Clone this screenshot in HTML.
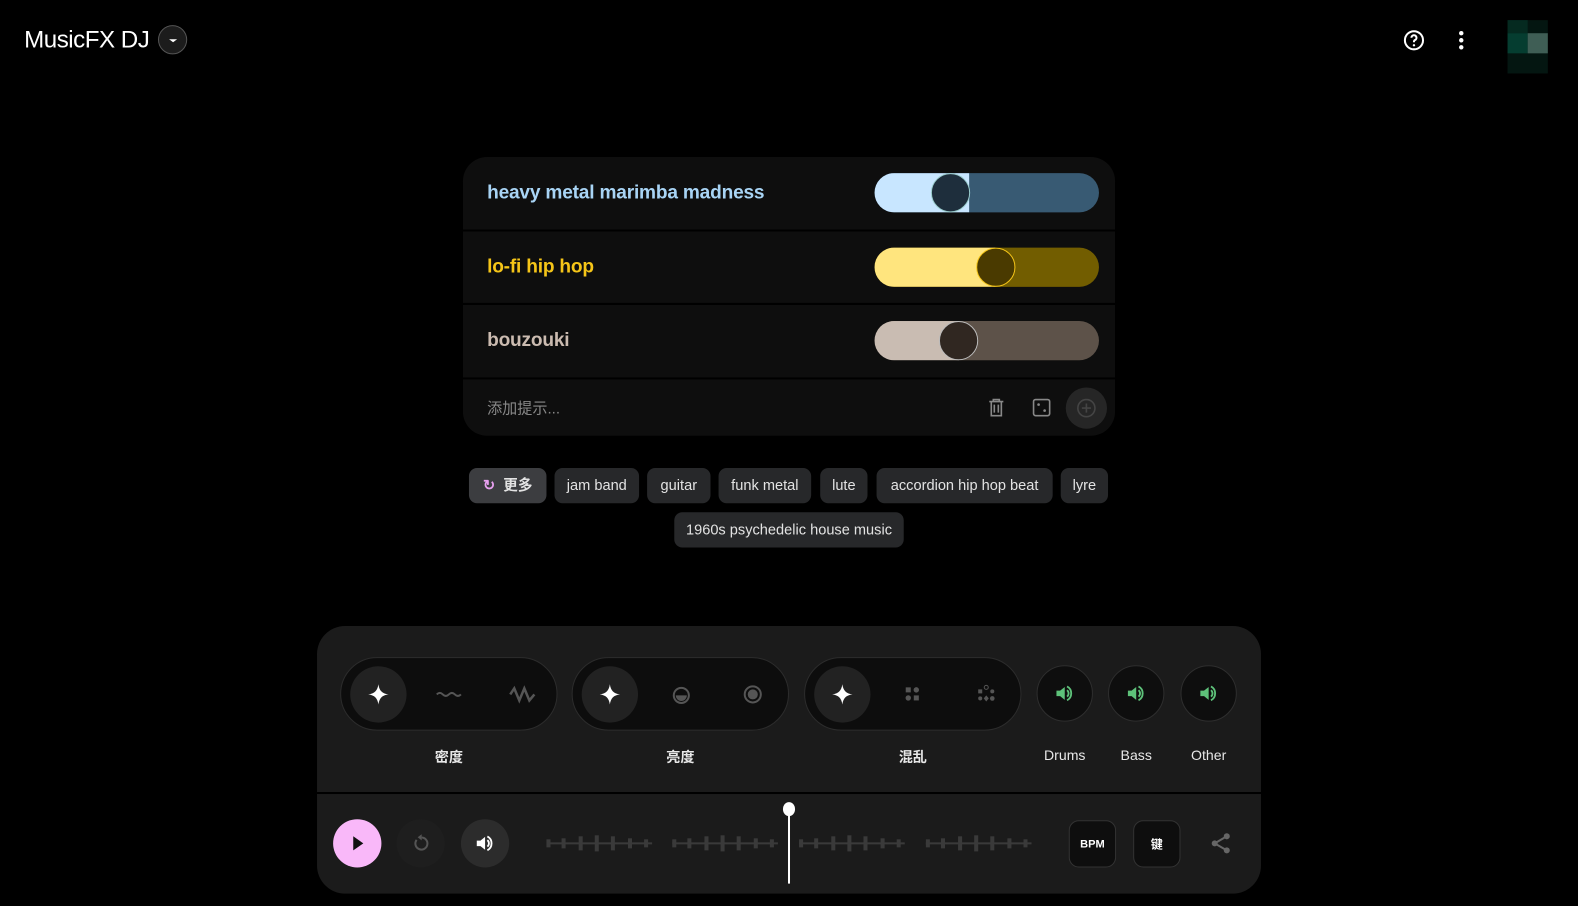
<!DOCTYPE html>
<html><head><meta charset="utf-8"><style>
*{box-sizing:border-box;margin:0;padding:0}
body{width:1578px;height:906px;background:#000;font-family:"Liberation Sans","Noto Sans CJK SC",sans-serif;color:#fff;position:relative;overflow:hidden}
#w{position:absolute;left:0;top:0;width:1568px;height:900px;transform:scale(1.00638);transform-origin:0 0}
.abs{position:absolute}
.row{position:absolute;left:460px;width:648px;background:#0e0e0e}
.lbl{position:absolute;left:24px;font-size:19px;font-weight:bold;letter-spacing:-0.2px}
.sl{position:absolute;left:409px;top:16px;width:223px;height:39px;border-radius:20px;overflow:hidden}
.knob{position:absolute;top:0;width:39px;height:39px;border-radius:50%}
.chip{position:absolute;top:465px;height:35px;background:#27282a;border-radius:8px;font-size:14.5px;color:#e3e3e3;line-height:37px;text-align:center}
.pill{position:absolute;top:653px;width:216px;height:73px;border-radius:37px;background:#0d0d0d;border:1px solid #2c2c2c}
.pill .c{position:absolute;left:9px;top:8px;width:56px;height:56px;border-radius:50%;background:#222;display:flex;align-items:center;justify-content:center}
.glab{position:absolute;top:742px;font-size:14px;font-weight:bold;color:#e8e8e8;text-align:center}
.sb{position:absolute;top:661px;width:56px;height:56px;border-radius:50%;background:#0e0e0e;border:1px solid #2e2e2e;display:flex;align-items:center;justify-content:center}
.sq{position:absolute;top:815px;width:47px;height:47px;border-radius:10px;background:#0e0e0e;border:1px solid #333;font-size:11px;font-weight:bold;display:flex;align-items:center;justify-content:center}
</style></head><body><div id="w">
<div class="abs" style="left:24px;top:26px;font-size:24px;letter-spacing:-0.5px">MusicFX DJ</div>
<div class="abs" style="left:157px;top:25px;width:29px;height:29px;border-radius:50%;background:#1c1c1c;border:1px solid #555"><div class="abs" style="left:10px;top:13px;border-left:4px solid transparent;border-right:4px solid transparent;border-top:3px solid #fff"></div></div>
<svg class="abs" style="left:1393px;top:28px" width="24" height="24" viewBox="0 0 24 24"><circle cx="12" cy="12" r="9" fill="none" stroke="#fff" stroke-width="2"/><path d="M9.5 9.5a2.5 2.5 0 1 1 3.5 2.3c-.7.4-1 .9-1 1.7v.5" fill="none" stroke="#fff" stroke-width="2"/><circle cx="12" cy="17" r="1.2" fill="#fff"/></svg>
<svg class="abs" style="left:1446px;top:30px" width="12" height="20"><circle cx="6" cy="3" r="2.2" fill="#fff"/><circle cx="6" cy="10" r="2.2" fill="#fff"/><circle cx="6" cy="17" r="2.2" fill="#fff"/></svg>
<div class="abs" style="left:1498px;top:20px;width:40px;height:53px;background:#041611">
<div class="abs" style="left:0;top:0;width:20px;height:13px;background:#052a20"></div>
<div class="abs" style="left:0;top:13px;width:20px;height:20px;background:#053d30"></div>
<div class="abs" style="left:20px;top:13px;width:20px;height:20px;background:#3f5e55"></div></div>

<div class="row" style="top:156px;height:72px;border-radius:24px 24px 0 0">
<div class="lbl" style="top:25px;color:#a8d4f5">heavy metal marimba madness</div>
<div class="sl" style="background:#385a73"><div class="abs" style="left:0;top:0;width:94px;height:39px;background:#c8e6ff"></div><div class="knob" style="left:56px;background:#1e2e3c;border:1px solid #9cc"></div></div></div>
<div class="row" style="top:230px;height:71px">
<div class="lbl" style="top:25px;color:#f5c518">lo-fi hip hop</div>
<div class="sl" style="top:16px;background:#725d00"><div class="abs" style="left:0;top:0;width:120px;height:39px;background:#ffe57e"></div><div class="knob" style="left:101px;background:#4a3a00;border:1px solid #f5c518"></div></div></div>
<div class="row" style="top:303px;height:72px">
<div class="lbl" style="top:25px;color:#cbbbb0">bouzouki</div>
<div class="sl" style="top:16px;background:#5d5249"><div class="abs" style="left:0;top:0;width:84px;height:39px;background:#c9bcb2"></div><div class="knob" style="left:64px;background:#302721;border:1px solid #bbb"></div></div></div>
<div class="row" style="top:377px;height:56px;border-radius:0 0 24px 24px">
<div class="abs" style="left:24px;top:18px;font-size:15px;color:#888">添加提示...</div>
<svg class="abs" style="left:521px;top:18px" width="18" height="20" viewBox="0 0 18 20"><path d="M2 4h14M6 4V2h6v2M4 4v14h10V4M7 7v8M11 7v8" fill="none" stroke="#888" stroke-width="1.6"/></svg>
<svg class="abs" style="left:565px;top:18px" width="20" height="20"><rect x="2" y="2" width="16" height="16" rx="2" fill="none" stroke="#888" stroke-width="1.6"/><circle cx="7" cy="7" r="1.3" fill="#888"/><circle cx="13" cy="13" r="1.3" fill="#888"/></svg>
<div class="abs" style="left:599px;top:8px;width:41px;height:41px;border-radius:50%;background:#262626"><svg class="abs" style="left:10px;top:10px" width="21" height="21"><circle cx="10.5" cy="10.5" r="8.5" fill="none" stroke="#444" stroke-width="1.6"/><path d="M10.5 6v9M6 10.5h9" stroke="#444" stroke-width="1.6"/></svg></div></div>

<div class="chip" style="left:466px;width:77px;background:#3c3d40;font-weight:bold"><span style="color:#e8a0f0">↻</span>&nbsp; 更多</div>
<div class="chip" style="left:551px;width:84px">jam band</div>
<div class="chip" style="left:643px;width:63px">guitar</div>
<div class="chip" style="left:714px;width:92px">funk metal</div>
<div class="chip" style="left:815px;width:47px">lute</div>
<div class="chip" style="left:871px;width:175px">accordion hip hop beat</div>
<div class="chip" style="left:1054px;width:47px">lyre</div>
<div class="chip" style="left:670px;top:509px;width:228px">1960s psychedelic house music</div>

<div class="abs" style="left:315px;top:622px;width:938px;height:266px;border-radius:28px;background:#1b1b1b;overflow:hidden">
<div class="abs" style="left:0;top:165px;width:938px;height:2px;background:#000"></div></div>

<div class="pill" style="left:338px"><div class="c"><svg width="22" height="22" viewBox="0 0 24 24"><path d="M12 1C13 8 16 11 23 12 16 13 13 16 12 23 11 16 8 13 1 12 8 11 11 8 12 1Z" fill="#fff"/></svg></div>
<svg class="abs" style="left:94px;top:30px" width="26" height="12"><path d="M1 6q3-3 6 0t6 0 6 0 6 0" fill="none" stroke="#555" stroke-width="2"/></svg>
<svg class="abs" style="left:166px;top:27px" width="30" height="18"><path d="M2 9l4-6 5 12 5-12 5 12 5-6" fill="none" stroke="#555" stroke-width="2.5"/></svg></div>
<div class="pill" style="left:568px"><div class="c"><svg width="22" height="22" viewBox="0 0 24 24"><path d="M12 1C13 8 16 11 23 12 16 13 13 16 12 23 11 16 8 13 1 12 8 11 11 8 12 1Z" fill="#fff"/></svg></div>
<svg class="abs" style="left:98px;top:27px" width="20" height="20"><circle cx="10" cy="10" r="7.5" fill="none" stroke="#555" stroke-width="2"/><path d="M4.5 10h11a5.5 5.5 0 0 1-11 0z" fill="#555"/></svg>
<svg class="abs" style="left:169px;top:26px" width="20" height="20"><circle cx="10" cy="10" r="8" fill="none" stroke="#555" stroke-width="2"/><circle cx="10" cy="10" r="5" fill="#555"/></svg></div>
<div class="pill" style="left:799px"><div class="c"><svg width="22" height="22" viewBox="0 0 24 24"><path d="M12 1C13 8 16 11 23 12 16 13 13 16 12 23 11 16 8 13 1 12 8 11 11 8 12 1Z" fill="#fff"/></svg></div>
<svg class="abs" style="left:99px;top:28px" width="16" height="16"><rect x="1" y="1" width="5" height="5" fill="#555"/><circle cx="11.5" cy="3.5" r="2.7" fill="#555"/><circle cx="3.5" cy="11.5" r="2.7" fill="#555"/><rect x="9" y="9" width="5" height="5" fill="#555"/></svg>
<svg class="abs" style="left:170px;top:26px" width="20" height="20"><rect x="2" y="5" width="4" height="4" fill="#555"/><circle cx="10" cy="3" r="2" fill="none" stroke="#555"/><circle cx="16" cy="7" r="2" fill="#555"/><circle cx="4" cy="14" r="2" fill="#555"/><path d="M10 11l2.5 3-2.5 3-2.5-3z" fill="#555"/><circle cx="16" cy="14" r="2.3" fill="#555"/></svg></div>
<div class="glab" style="left:338px;width:216px">密度</div>
<div class="glab" style="left:568px;width:216px">亮度</div>
<div class="glab" style="left:799px;width:216px">混乱</div>

<svg width="0" height="0" style="position:absolute"><defs><symbol id="spk" viewBox="0 0 24 24"><path d="M3 9h4l5-4v14l-5-4H3z" fill="currentColor"/><path d="M14.5 8.5a4.5 4.5 0 0 1 0 7M14.5 4.5a8.5 8.5 0 0 1 0 15" fill="none" stroke="currentColor" stroke-width="2"/></symbol></defs></svg>
<div class="sb" style="left:1030px;color:#5ec27a"><svg width="22" height="22"><use href="#spk"/></svg></div>
<div class="sb" style="left:1101px;color:#5ec27a"><svg width="22" height="22"><use href="#spk"/></svg></div>
<div class="sb" style="left:1173px;color:#5ec27a"><svg width="22" height="22"><use href="#spk"/></svg></div>
<div class="glab" style="left:1020px;width:76px;font-weight:normal">Drums</div>
<div class="glab" style="left:1091px;width:76px;font-weight:normal">Bass</div>
<div class="glab" style="left:1163px;width:76px;font-weight:normal">Other</div>

<div class="abs" style="left:331px;top:814px;width:48px;height:48px;border-radius:50%;background:#f9b8f9"><div class="abs" style="left:20px;top:17px;border-top:7px solid transparent;border-bottom:7px solid transparent;border-left:10px solid #111"></div></div>
<div class="abs" style="left:394px;top:814px;width:48px;height:48px;border-radius:50%;background:#1e1e1e"><svg class="abs" style="left:14px;top:14px" width="20" height="20" viewBox="0 0 20 20"><path d="M6 6.5A6 6 0 1 0 11 4.2" fill="none" stroke="#555" stroke-width="2"/><path d="M11 1v6l-4-3z" fill="#555"/></svg></div>
<div class="abs" style="left:458px;top:814px;width:48px;height:48px;border-radius:50%;background:#2c2c2c;color:#fff"><svg class="abs" style="left:13px;top:13px" width="22" height="22"><use href="#spk"/></svg></div>
<svg class="abs" style="left:540px;top:826px" width="490" height="24">
<g id="wv" fill="#3a3a3a"><rect x="3" y="11" width="105" height="2"/><rect x="3" y="8" width="4" height="8"/><rect x="18" y="7" width="4" height="10"/><rect x="35" y="5" width="4" height="14"/><rect x="51" y="4" width="4" height="16"/><rect x="67" y="5" width="4" height="14"/><rect x="84" y="7" width="4" height="10"/><rect x="100" y="8" width="4" height="8"/></g>
<use href="#wv" x="125"/><use href="#wv" x="251"/><use href="#wv" x="377"/></svg>
<div class="abs" style="left:783px;top:806px;width:2px;height:72px;background:#fff"></div>
<div class="abs" style="left:778px;top:797px;width:12px;height:14px;border-radius:50%;background:#fff"></div>
<div class="sq" style="left:1062px">BPM</div>
<div class="sq" style="left:1126px;font-size:12px">键</div>
<svg class="abs" style="left:1202px;top:827px" width="22" height="22" viewBox="0 0 22 22"><circle cx="17" cy="4" r="3" fill="#666"/><circle cx="5" cy="11" r="3" fill="#666"/><circle cx="17" cy="18" r="3" fill="#666"/><path d="M17 4L5 11l12 7" fill="none" stroke="#666" stroke-width="2"/></svg>
</div></body></html>
